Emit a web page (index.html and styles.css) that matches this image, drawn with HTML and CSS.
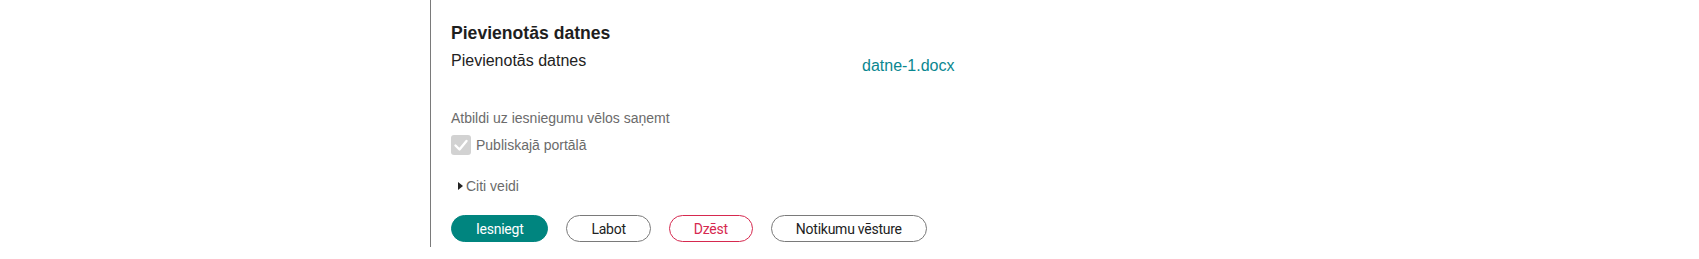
FILE: index.html
```html
<!DOCTYPE html>
<html lang="lv">
<head>
    <meta charset="UTF-8">
    <meta name="viewport" content="width=device-width, initial-scale=1.0">
    <title>Iesniegums</title>
    <link rel="stylesheet" href="styles.css">
</head>
<body>
    <div class="panel">
        <h2 class="section-title">Pievienotās datnes</h2>
        <div class="file-row">
            <span class="file-label">Pievienotās datnes</span>
            <a href="#" class="file-link">datne-1.docx</a>
        </div>

        <div class="answer-block">
            <p class="answer-title">Atbildi uz iesniegumu vēlos saņemt</p>
            <label class="check-row">
                <span class="check-box">
                    <svg viewBox="0 0 20 20" width="20" height="20">
                        <path d="M4.5 10.5 L8.5 14.5 L15.5 6" fill="none" stroke="#fff" stroke-width="2.4" stroke-linecap="round" stroke-linejoin="round"/>
                    </svg>
                </span>
                <span class="check-label">Publiskajā portālā</span>
            </label>
        </div>

        <div class="other-ways">
            <span class="marker"></span>
            <span>Citi veidi</span>
        </div>

        <div class="actions">
            <button class="btn btn-primary">Iesniegt</button>
            <button class="btn">Labot</button>
            <button class="btn btn-danger">Dzēst</button>
            <button class="btn">Notikumu vēsture</button>
        </div>
    </div>
</body>
</html>
```

FILE: styles.css
```css
body {
    margin: 0;
    padding: 0;
    background: #fff;
    font-family: Arial, "Liberation Sans", sans-serif;
    color: #222;
}

.panel {
    margin-left: 430px;
    width: 700px;
    border-left: 1px solid #7a7a7a;
    padding: 23px 20px 5px 20px;
}

.section-title {
    margin: 0;
    font-size: 17.6px;
    font-weight: bold;
    color: #1e1e1e;
}

.file-row {
    display: grid;
    grid-template-columns: 411px 1fr;
    margin-top: 8px;
}

.file-label {
    font-size: 16px;
}

.file-link {
    margin-top: 5px;
    font-size: 16px;
    color: #0a8790;
    text-decoration: none;
}

.answer-block {
    margin-top: 35px;
}

.answer-title {
    margin: 0;
    font-size: 14px;
    color: #6b6b6b;
}

.check-row {
    display: flex;
    align-items: center;
    gap: 5px;
    margin-top: 9px;
}

.check-box {
    width: 20px;
    height: 20px;
    background: #d2d2d2;
    border-radius: 3px;
    display: flex;
}

.check-label {
    font-size: 14px;
    color: #6b6b6b;
}

.other-ways {
    display: flex;
    align-items: center;
    gap: 3px;
    margin-top: 23px;
    padding-left: 7px;
    font-size: 14px;
    color: #6b6b6b;
}

.marker {
    width: 0;
    height: 0;
    border-top: 4px solid transparent;
    border-bottom: 4px solid transparent;
    border-left: 5px solid #222;
}

.actions {
    display: flex;
    gap: 18px;
    margin-top: 21px;
}

.btn {
    box-sizing: border-box;
    height: 27px;
    padding: 0 24px;
    border: 1px solid #7a7a7a;
    border-radius: 14px;
    background: #fff;
    color: #222;
    font-family: Roboto, Arial, sans-serif;
    font-size: 14px;
    letter-spacing: -0.25px;
    cursor: pointer;
}

.btn-primary {
    background: #00857f;
    border-color: #00857f;
    color: #fff;
}

.btn-danger {
    border-color: #d6294f;
    color: #d6294f;
}
```
